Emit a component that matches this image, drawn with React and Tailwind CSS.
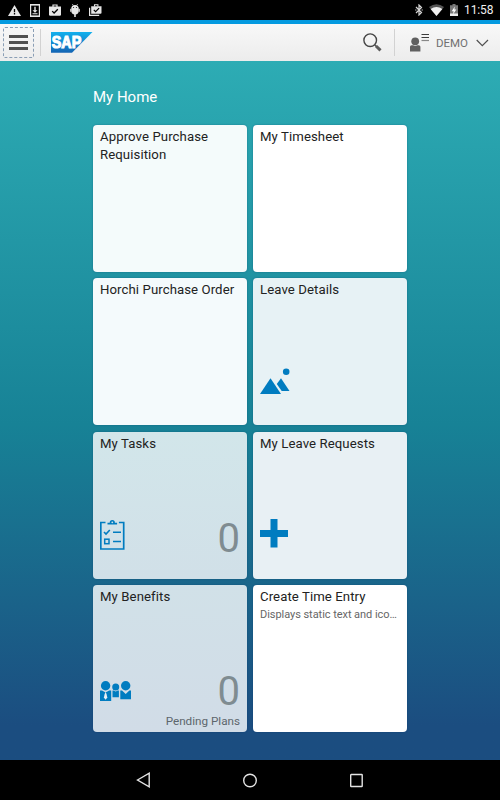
import React from "react";

/* Status bar icons */
function WarningIcon() {
  return (
    <svg width="13" height="11" viewBox="0 0 13 11">
      <path d="M6.5 0L13 11H0z" fill="#e6e6e6" />
      <path d="M6.5 4v3.2M6.5 8.1v1.4" stroke="#000" strokeWidth="1.3" />
    </svg>
  );
}

function DownloadIcon() {
  return (
    <svg width="10" height="13" viewBox="0 0 10 13">
      <rect x="0.6" y="0.6" width="8.8" height="11.8" fill="none" stroke="#e6e6e6" strokeWidth="1.2" />
      <path d="M0 .8h10M0 12.2h10" stroke="#e6e6e6" strokeWidth="1.6" />
      <path d="M4.3 2.8h1.4v3.4h1.8L5 8.8 2.5 6.2h1.8zM2.5 9.3h5v1h-5z" fill="#e6e6e6" />
    </svg>
  );
}

function BagIcon() {
  return (
    <svg width="12" height="12" viewBox="0 0 12 12">
      <path d="M4 3V1h4v2" fill="none" stroke="#e6e6e6" strokeWidth="1.2" />
      <path d="M0 2.6h12v8q0 1.2-1.2 1.2H1.2Q0 11.8 0 10.6z" fill="#e6e6e6" />
      <path d="M3.2 7.1l1.9 1.9 3.7-3.8" fill="none" stroke="#000" strokeWidth="1.3" />
    </svg>
  );
}

function AndroidIcon() {
  return (
    <svg width="10" height="13" viewBox="0 0 10 13">
      <path d="M2.3 0l1 1.5M7.7 0l-1 1.5" stroke="#e6e6e6" strokeWidth=".7" />
      <path d="M1.2 5a3.8 4 0 017.6 0v1.8a3.8 3.7 0 01-7.6 0z" fill="#e6e6e6" />
      <path d="M.7 4.8v3M9.3 4.8v3" stroke="#e6e6e6" strokeWidth="1" />
      <path d="M4.2 8.5h1.6V13H4.2z" fill="#e6e6e6" />
      <circle cx="3.6" cy="3.5" r=".5" />
      <circle cx="6.4" cy="3.5" r=".5" />
    </svg>
  );
}

function BagsIcon() {
  return (
    <svg width="13" height="12" viewBox="0 0 13 12">
      <path d="M.6 3.8v7.6h9.6" fill="none" stroke="#e6e6e6" strokeWidth="1.2" />
      <path d="M5.5 2.5V.7h3.4v1.8" fill="none" stroke="#e6e6e6" strokeWidth="1.1" />
      <path d="M2.2 2.2h10.3v6.5q0 1-1 1H2.2z" fill="#e6e6e6" />
      <path d="M4.8 5.9l1.8 1.8 3.5-3.5" fill="none" stroke="#000" strokeWidth="1.2" />
    </svg>
  );
}

function BluetoothIcon() {
  return (
    <svg width="8" height="12" viewBox="0 0 8 12" fill="none" stroke="#d5d5d5" strokeWidth="1.2">
      <path d="M1 3l5.5 5.5L4 11V1l2.5 2.5L1 9" />
      <path d="M.2 6h1.2M6.6 6h1.2" />
    </svg>
  );
}

function WifiIcon() {
  return (
    <svg width="15" height="12" viewBox="0 0 15 12">
      <path d="M0 3Q7.5-2.6 15 3L7.5 12z" fill="#555" />
      <path d="M1.6 4.9Q7.5 1.2 13.4 4.9L7.5 12z" fill="#f0f0f0" />
    </svg>
  );
}

function BatteryIcon() {
  return (
    <svg width="8" height="12" viewBox="0 0 8 12">
      <path d="M2.5 0h3v1.3H8V12H0V1.3h2.5z" fill="#777" />
      <path d="M0 9.5h8V12H0z" fill="#eee" />
      <path d="M4.8 2.5L1.7 7.2h1.9L3 10.5l3.3-5H4.4z" fill="#fff" />
    </svg>
  );
}

function StatusBar() {
  return (
    <div className="flex h-5 shrink-0 items-center justify-between bg-black pl-2 pr-[6px]">
      <div className="flex items-center gap-[9px]">
        <WarningIcon />
        <DownloadIcon />
        <BagIcon />
        <AndroidIcon />
        <BagsIcon />
      </div>
      <div className="flex items-center gap-[6px]">
        <BluetoothIcon />
        <WifiIcon />
        <BatteryIcon />
        <span className="w-[30px] whitespace-nowrap text-[12px] leading-[22px] tracking-[-0.1px] text-[#f0f0f0]">11:58</span>
      </div>
    </div>
  );
}

/* Shell header */
function SapLogo() {
  return (
    <svg width="42" height="21" viewBox="0 0 42 21">
      <defs>
        <linearGradient id="sap" x1="0" y1="0" x2="0" y2="1">
          <stop offset="0" stopColor="#13b0ed" />
          <stop offset="1" stopColor="#1364b4" />
        </linearGradient>
      </defs>
      <path d="M0 0h41.5L21 20.7H0z" fill="url(#sap)" />
      <text
        x="0.8"
        y="16"
        textLength="29.5"
        lengthAdjust="spacingAndGlyphs"
        fill="#fff"
        stroke="#fff"
        strokeWidth="1.1"
        className="font-['Liberation_Sans',sans-serif] text-[16px] font-bold"
      >
        SAP
      </text>
    </svg>
  );
}

function SearchIcon() {
  return (
    <svg width="19" height="19" viewBox="0 0 19 19" fill="none">
      <circle cx="7.2" cy="7.2" r="6.3" stroke="#454545" strokeWidth="1.4" />
      <path d="M11.7 11.7l1.8 1.8" stroke="#555" strokeWidth="1.5" />
      <path d="M13 13l4.5 4.4" stroke="#5c5c5c" strokeWidth="3" />
    </svg>
  );
}

function UserIcon() {
  return (
    <svg width="19" height="19" viewBox="0 0 19 19">
      <circle cx="5.2" cy="8.3" r="3.9" fill="#606060" />
      <path d="M0 18.5v-4.7q0-1.6 1.6-1.6H3l2.2.8 2.2-.8h1.4q1.6 0 1.6 1.6v4.7z" fill="#606060" />
      <path d="M11.5 1.5H19M11.5 4.5H19" stroke="#3c3c3c" strokeWidth="1.2" />
      <path d="M11.5 7.5H19" stroke="#888" strokeWidth="1.2" />
    </svg>
  );
}

function Header() {
  return (
    <header className="flex h-[41px] shrink-0 items-center border-t-4 border-[#049ae0] bg-linear-to-b from-[#f8f8f8] to-[#ececec] pl-[3px]">
      <button className="flex h-[31px] w-[31px] flex-col items-center justify-center gap-[3px] rounded-[2px] border border-dashed border-[#8a9eb5]">
        <span className="h-[3px] w-[19px] bg-[#505050]" />
        <span className="h-[3px] w-[19px] bg-[#505050]" />
        <span className="h-[3px] w-[19px] bg-[#505050]" />
      </button>
      <div className="ml-[6px] mr-[10px] h-[27px] w-px bg-[#d2d2d2]" />
      <SapLogo />
      <div className="ml-auto flex items-center">
        <SearchIcon />
        <div className="ml-3 mr-[15px] h-[27px] w-px bg-[#d2d2d2]" />
        <UserIcon />
        <span className="ml-[7px] w-[33px] text-[11.5px] leading-4 text-[#707070]">DEMO</span>
        <svg width="13" height="8" viewBox="0 0 13 8" className="ml-[7px] mr-[11px]">
          <path d="M.7 1l5.6 5.6L12 1" fill="none" stroke="#505050" strokeWidth="1.2" />
        </svg>
      </div>
    </header>
  );
}

/* Tile icons */
function MountainIcon() {
  return (
    <svg width="31" height="27" viewBox="0 0 31 27" fill="#007cc0">
      <path d="M0 26L10.5 10.2 21 26z" />
      <path d="M16.8 15.9L21 10.2l8.5 12.7h-7.8z" />
      <circle cx="26.2" cy="3.8" r="3.3" />
    </svg>
  );
}

function TaskIcon() {
  return (
    <svg width="25" height="31" viewBox="0 0 25 31" fill="none" stroke="#007cc0">
      <path d="M5.5 2.5H.8v26.5h22.9V2.5h-4.8" strokeWidth="1.7" />
      <path d="M7.5 4.5V2.7h2.2a2.6 2.6 0 015.2 0h2.2v1.800z" fill="#007cc0" stroke="none" />
      <circle cx="12.3" cy="2.3" r=".9" fill="#d2e3e8" stroke="none" />
      <path d="M4 12l2 2 3.8-4M13 12.3h8M13 21.5h8" strokeWidth="1.6" />
      <rect x="4.7" y="19.2" width="4.3" height="4.5" strokeWidth="1.5" />
    </svg>
  );
}

function PlusIcon() {
  return (
    <svg width="28" height="29" viewBox="0 0 28 29" fill="#007cc0">
      <path d="M10.5 0h7v11H28v7H17.5v10.5h-7V18H0v-7h10.5z" />
    </svg>
  );
}

function FamilyIcon() {
  return (
    <svg width="31" height="21" viewBox="0 0 31 21" fill="#007cc0">
      <circle cx="5.6" cy="4.8" r="4.7" />
      <path d="M0 20V9.4h2l3.6 2 3.6-2h2V20z" />
      <path d="M5.6 11l.9 2 .8 3.5-1.7 2.2-1.7-2.2.8-3.5z" fill="#e6eff5" />
      <circle cx="15.7" cy="5.9" r="3.5" />
      <path d="M12.5 16.2V9.5h1l2.2 1 2.2-1h1v6.7z" />
      <circle cx="25.7" cy="4.8" r="4.7" />
      <path d="M20.3 18.2V9.4H22l3.7 3.6 3.7-3.6H31v8.8z" />
    </svg>
  );
}

const tiles = [
  { title: "Approve Purchase Requisition", bg: "bg-[#f4fbfb]" },
  { title: "My Timesheet", bg: "bg-white" },
  { title: "Horchi Purchase Order", bg: "bg-[#f4fafc]" },
  { title: "Leave Details", bg: "bg-[#e7f2f5]", icon: <MountainIcon />, iconPos: "bottom-[30px]" },
  { title: "My Tasks", bg: "bg-linear-to-b from-[#d2e6ea] to-[#d1e0e8]", icon: <TaskIcon />, iconPos: "bottom-[28px]", count: 0 },
  { title: "My Leave Requests", bg: "bg-[#e8f0f4]", icon: <PlusIcon />, iconPos: "bottom-[31px]" },
  { title: "My Benefits", bg: "bg-linear-to-b from-[#d1e1e8] to-[#d1dce7]", icon: <FamilyIcon />, iconPos: "bottom-[30px]", count: 0, footer: "Pending Plans" },
  { title: "Create Time Entry", bg: "bg-white", subtitle: "Displays static text and ico…" },
];

function Tile({ tile }) {
  return (
    <div className={`flex flex-col rounded-[4px] px-[7px] pt-[3px] shadow-[0_0_2px_rgba(0,50,100,0.4)] ${tile.bg}`}>
      <h3 className="text-[13.2px] leading-[18px] tracking-[0.08px] text-[#222]">{tile.title}</h3>
      {tile.subtitle && (
        <p className="whitespace-nowrap text-[11px] leading-[18px] tracking-[-0.05px] text-[#666]">{tile.subtitle}</p>
      )}
      <div className="relative mt-auto flex items-end justify-between">
        <div className={`relative ${tile.iconPos || ""}`}>{tile.icon}</div>
        {tile.count !== undefined && (
          <span className="mb-5 text-[40px] leading-[40px] text-[#7f8c91]">{tile.count}</span>
        )}
        {tile.footer && (
          <span className="absolute right-0 bottom-[3px] text-[11.7px] leading-4 text-[#5d666c]">{tile.footer}</span>
        )}
      </div>
    </div>
  );
}

function NavBar() {
  return (
    <nav className="flex h-10 shrink-0 items-center justify-center gap-[92px] bg-black">
      <svg width="15" height="16" viewBox="0 0 15 16" fill="none" stroke="#e4e4e4" strokeWidth="1.4">
        <path d="M1.5 8L13.2 1.2v13.6z" />
      </svg>
      <svg width="15" height="15" viewBox="0 0 15 15" fill="none" stroke="#e4e4e4" strokeWidth="1.4">
        <circle cx="7" cy="7.5" r="6.3" />
      </svg>
      <svg width="15" height="15" viewBox="0 0 15 15" fill="none" stroke="#e4e4e4" strokeWidth="1.4">
        <rect x="0.7" y="1.5" width="11.5" height="12" rx=".5" />
      </svg>
    </nav>
  );
}

export default function App() {
  return (
    <div className="flex h-[800px] w-[500px] flex-col overflow-hidden font-[Roboto,sans-serif]">
      <StatusBar />
      <Header />
      <main className="flex-1 bg-linear-to-b from-[#2dacb4] from-0% via-[#178296] via-52% to-[#1b4d80] to-95% px-[93px] pt-[26px]">
        <h2 className="text-[15px] leading-5 text-white">My Home</h2>
        <div className="mt-[18px] grid h-[607px] grid-cols-2 grid-rows-4 gap-x-[6px] gap-y-[6.3px]">
          {tiles.map((tile) => (
            <Tile key={tile.title} tile={tile} />
          ))}
        </div>
      </main>
      <NavBar />
    </div>
  );
}
